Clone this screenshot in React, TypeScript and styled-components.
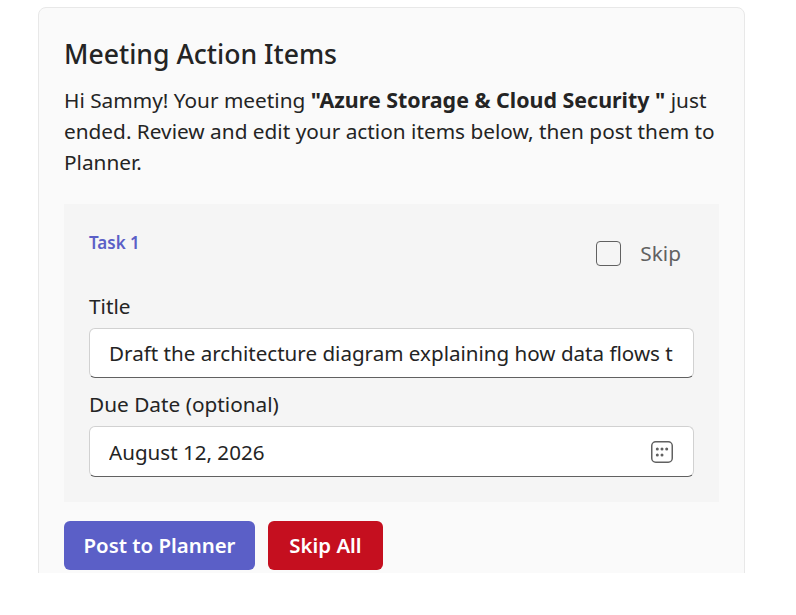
import React from 'react'
import styled, { createGlobalStyle } from 'styled-components'

const GlobalStyle = createGlobalStyle`
  html, body {
    margin: 0;
    padding: 0;
    background: #ffffff;
  }
  * {
    box-sizing: border-box;
  }
`

const Page = styled.div`
  height: 573px;
  overflow: hidden;
  padding: 7px 51px 0 38px;
  font-family: 'Noto Sans', 'Open Sans', sans-serif;
  color: #242424;
`

const Card = styled.div`
  background: #fafafa;
  border: 1px solid #e8e8e8;
  border-radius: 8px;
  padding: 25px;
`

const Heading = styled.h1`
  margin: 1px 0 0;
  font-size: 26.6px;
  line-height: 40px;
  font-weight: 550;
  color: #242424;
`

const Intro = styled.p`
  margin: 10px 0 0;
  font-size: 20.8px;
  line-height: 31px;
  color: #242424;

  b {
    font-weight: 700;
    font-size: 21.4px;
  }
`

const TaskPanel = styled.div`
  margin-top: 26px;
  background: #f5f5f5;
  padding: 25px;
  height: 298px;
`

const TaskHeader = styled.div`
  display: flex;
  justify-content: space-between;
  align-items: flex-start;
  height: 62px;
`

const TaskLabel = styled.span`
  margin-top: 2px;
  font-size: 17px;
  line-height: 24px;
  font-weight: 600;
  color: #5b5fc7;
`

const SkipToggle = styled.label`
  display: flex;
  align-items: center;
  gap: 19px;
  padding: 10px 13px 0 0;
  font-size: 20.8px;
  line-height: 28px;
  color: #616161;
`

const CheckBox = styled.span`
  width: 25px;
  height: 25px;
  border: 1px solid #616161;
  border-radius: 4px;
`

const FieldLabel = styled.div`
  font-size: 20.8px;
  line-height: 28px;
  color: #242424;
  height: 37px;
  padding-top: 1px;
`

const InputShell = styled.div<{ $gap?: number; $h?: number }>`
  display: flex;
  align-items: center;
  justify-content: space-between;
  height: ${p => p.$h ?? 50}px;
  margin-bottom: ${p => p.$gap ?? 0}px;
  padding: 0 20px 0 19px;
  background: #ffffff;
  border: 1px solid #d1d1d1;
  border-bottom-color: #616161;
  border-radius: 6px;
  font-size: 20.6px;
  line-height: 28px;
  color: #242424;
  overflow: hidden;
`

const InputText = styled.span`
  flex: 1;
  white-space: nowrap;
  overflow: hidden;
`

const ButtonRow = styled.div`
  display: flex;
  gap: 13px;
  margin-top: 19px;
`

const ActionButton = styled.button<{ $bg: string; $w: number }>`
  width: ${p => p.$w}px;
  height: 49px;
  padding: 0 0 2px;
  border: none;
  border-radius: 6px;
  background: ${p => p.$bg};
  color: #ffffff;
  font-family: inherit;
  font-size: 20.4px;
  font-weight: 600;
`

const CalendarIcon = () => (
  <svg width="22" height="22" viewBox="0 0 22 22" fill="none">
    <rect x="0.75" y="0.75" width="20.5" height="20.5" rx="4" stroke="#616161" strokeWidth="1.5" />
    <circle cx="6.3" cy="8" r="1.5" fill="#616161" />
    <circle cx="11" cy="8" r="1.5" fill="#616161" />
    <circle cx="15.7" cy="8" r="1.5" fill="#616161" />
    <circle cx="6.3" cy="14" r="1.5" fill="#616161" />
    <circle cx="11" cy="14" r="1.5" fill="#616161" />
  </svg>
)

const App = () => {
  return (
    <Page>
      <GlobalStyle />
      <Card>
        <Heading>Meeting Action Items</Heading>
        <Intro>
          Hi Sammy! Your meeting <b>"Azure Storage &amp; Cloud Security "</b> just ended. Review and edit your action items below, then post them to Planner.
        </Intro>
        <TaskPanel>
          <TaskHeader>
            <TaskLabel>Task 1</TaskLabel>
            <SkipToggle>
              <CheckBox />
              Skip
            </SkipToggle>
          </TaskHeader>
          <FieldLabel>Title</FieldLabel>
          <InputShell $gap={11}>
            <InputText>Draft the architecture diagram explaining how data flows through the system</InputText>
          </InputShell>
          <FieldLabel>Due Date (optional)</FieldLabel>
          <InputShell $h={51}>
            <InputText>August 12, 2026</InputText>
            <CalendarIcon />
          </InputShell>
        </TaskPanel>
        <ButtonRow>
          <ActionButton $bg="#5b5fc7" $w={191}>Post to Planner</ActionButton>
          <ActionButton $bg="#c50f1f" $w={115}>Skip All</ActionButton>
        </ButtonRow>
      </Card>
    </Page>
  )
}

export default App
